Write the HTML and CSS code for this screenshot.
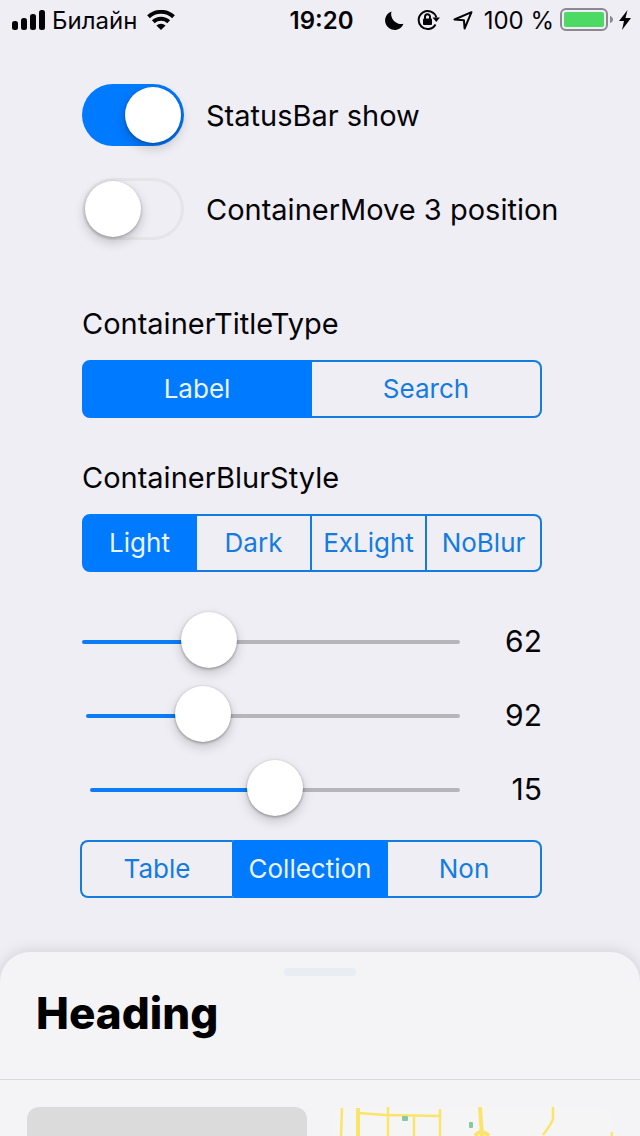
FILE: index.html
```html
<!DOCTYPE html>
<html lang="en">
<head>
<meta charset="utf-8">
<meta name="viewport" content="width=device-width">
<title>Container settings</title>
<link rel="stylesheet" href="styles.css">
</head>
<body>
<header class="status">
  <div class="status-left">
    <svg class="icon" width="34" height="20" viewBox="0 0 34 20"><rect x="0" y="11" width="6" height="9" rx="2.5"/><rect x="9" y="8" width="6" height="12" rx="2.5"/><rect x="18" y="4" width="6" height="16" rx="2.5"/><rect x="27" y="0" width="6" height="20" rx="2.5"/></svg>
    <span class="carrier">Билайн</span>
    <svg class="icon" width="28" height="20" viewBox="0 0 28 20"><path d="M14 20l-4.600-4.600a7 7 0 0 1 9.200 0z"/><path class="stroke thick" d="M6.300 11.700a11.300 11.300 0 0 1 15.400 0M1.500 6.800a18.300 18.300 0 0 1 25 0"/></svg>
  </div>
  <time class="clock">19:20</time>
  <div class="status-right">
    <div class="indicators">
      <svg class="icon" width="19" height="19" viewBox="0 0 19 19"><path d="M6.500 .5A9.500 9.500 0 1 0 18.500 12.800 10 10 0 0 1 6.500 .5z"/></svg>
      <svg class="icon" width="23" height="22" viewBox="0 0 23 22"><path class="stroke" d="M18.500 15.500A9 9 0 1 1 19.300 8.500"/><path d="M15.500 8.500H23l-3.700 4.500z"/><rect x="6" y="9.500" width="9" height="6.500" rx="1"/><path class="stroke" d="M8 10V7.800a2.500 2.500 0 0 1 5 0V10"/></svg>
      <svg class="icon" width="20" height="19" viewBox="0 0 20 19"><path class="stroke thin" d="M18.500 1.200L1.500 8.500l9.400.7.700 8.300z"/></svg>
    </div>
    <span class="percent">100 %</span>
    <svg class="icon" width="53" height="24" viewBox="0 0 53 24"><rect x="1" y="1" width="46" height="21" rx="5" fill="none" stroke="#8c8792" stroke-width="2"/><rect x="4" y="4" width="40" height="15" rx="2" fill="#4cd964"/><path d="M50 8c4 1 4 6 0 7z" fill="#8c8792"/></svg>
    <svg class="icon" width="12" height="20" viewBox="0 0 12 20"><path d="M8.500 0L0 11h5L3 20l9-12H6.500z"/></svg>
  </div>
</header>

<main class="settings">
  <div class="switches">
    <label class="switch-row"><input class="switch" type="checkbox" role="switch" checked><span>StatusBar show</span></label>
    <label class="switch-row"><input class="switch" type="checkbox" role="switch"><span>ContainerMove 3 position</span></label>
  </div>

  <section class="group" aria-labelledby="title-type">
    <h2 class="group-title" id="title-type">ContainerTitleType</h2>
    <div class="segments">
      <button class="segment selected" type="button" aria-pressed="true">Label</button>
      <button class="segment" type="button" aria-pressed="false">Search</button>
    </div>
  </section>

  <section class="group" aria-labelledby="blur-style">
    <h2 class="group-title" id="blur-style">ContainerBlurStyle</h2>
    <div class="segments">
      <button class="segment selected" type="button" aria-pressed="true">Light</button>
      <button class="segment" type="button" aria-pressed="false">Dark</button>
      <button class="segment" type="button" aria-pressed="false">ExLight</button>
      <button class="segment" type="button" aria-pressed="false">NoBlur</button>
    </div>
  </section>

  <div class="sliders">
    <div class="slider-row"><input class="slider" id="s1" type="range" aria-label="First value" max="202" value="62" style="--fill:31%"><output class="value" for="s1">62</output></div>
    <div class="slider-row inset"><input class="slider" id="s2" type="range" aria-label="Second value" max="329" value="92" style="--fill:28%"><output class="value" for="s2">92</output></div>
    <div class="slider-row inset-more"><input class="slider" id="s3" type="range" aria-label="Third value" max="30" value="15" style="--fill:50%"><output class="value" for="s3">15</output></div>
  </div>

  <div class="segments content-type">
    <button class="segment" type="button" aria-pressed="false">Table</button>
    <button class="segment selected" type="button" aria-pressed="true">Collection</button>
    <button class="segment" type="button" aria-pressed="false">Non</button>
  </div>
</main>

<section class="sheet">
  <div class="sheet-head">
    <div class="handle"></div>
    <h1 class="heading">Heading</h1>
  </div>
  <div class="cards">
    <div class="card"></div>
    <div class="card map">
      <svg width="280" height="29" viewBox="0 0 280 29">
        <g fill="none" stroke="#fbe46a" stroke-width="2.500"><path d="M9 1L8 29"/><path stroke-width="4" d="M25 1V29"/><path d="M25 6L52 8 107 9M55 0V29M81 8V29M107 2V29"/><path stroke-width="4" d="M147 0L149 29M142 29q6-8 14 0"/><path d="M220 0V12Q219 16 210 28M279 25V29"/></g>
        <g fill="#84c9a0"><rect x="69" y="9" width="6" height="5" rx="1"/><rect x="136" y="15" width="4" height="6" rx="1"/></g>
      </svg>
    </div>
  </div>
</section>
</body>
</html>
```
FILE: styles.css
```css
* { box-sizing: border-box; }

body {
  margin: 0;
  height: 100vh;
  display: flex;
  flex-direction: column;
  overflow: hidden;
  background: #efeef5;
  color: #050508;
  font-family: Inter, "Noto Sans", sans-serif;
  font-size: 29px;
}

.status {
  display: grid;
  grid-template-columns: 1fr auto 1fr;
  align-items: center;
  height: 40px;
  padding: 0 9px 0 12px;
  font-size: 24px;
}
.status-left, .status-right { display: flex; align-items: center; gap: 6px; white-space: nowrap; }
.carrier { margin-right: 4px; }
.status-right { justify-content: flex-end; }
.indicators { display: flex; align-items: center; gap: 13px; margin-right: 5px; }
.clock { font-weight: 600; }
.icon { flex: none; fill: #050508; }
.stroke { fill: none; stroke: #050508; stroke-width: 2; }
.thick { stroke-width: 4; }
.thin { stroke-width: 2; stroke-linejoin: round; }

.settings { padding: 44px 98px 54px 82px; }

.switches { display: grid; gap: 32px; }
.switch-row { display: flex; align-items: center; gap: 22px; white-space: nowrap; }
.switch {
  appearance: none;
  flex: none;
  display: flex;
  align-items: center;
  width: 102px;
  height: 62px;
  margin: 0;
  padding: 0 3px;
  border-radius: 31px;
  box-shadow: inset 0 0 0 3px #e5e4e9;
}
.switch::before {
  content: "";
  width: 56px;
  height: 56px;
  border-radius: 50%;
  background: #fff;
  box-shadow: 0 5px 12px rgba(0, 0, 0, .2), 0 1px 3px rgba(0, 0, 0, .25);
}
.switch:checked { justify-content: flex-end; background: #007aff; box-shadow: none; }

.group { margin-top: 42px; }
.switches + .group { margin-top: 66px; }
.group-title { margin: 0 0 18px; font-size: 29px; font-weight: 400; line-height: 36px; }

.segments {
  display: grid;
  grid-auto-flow: column;
  grid-auto-columns: 1fr;
  height: 58px;
}
.segment {
  padding: 0 0 2px;
  border: 2px solid #147ce0;
  border-left-width: 0;
  background: none;
  color: #147ce0;
  font: inherit;
  font-size: 26px;
}
.segment:first-child { border-left-width: 2px; border-radius: 8px 0 0 8px; }
.segment:last-child { border-radius: 0 8px 8px 0; }
.segment.selected { background: #007aff; border-color: #007aff; color: #eaf4ff; }
.segment:has(+ .selected) { border-right-color: #007aff; }

.sliders { display: grid; gap: 14px; margin: 40px 0 20px; }
.slider-row { display: grid; grid-template-columns: 1fr 82px; align-items: center; height: 60px; text-align: right; }
.value { padding-bottom: 2px; font-size: 30px; line-height: 36px; }
.inset { padding-left: 4px; }
.inset-more { padding-left: 8px; }
.slider { appearance: none; width: 100%; height: 60px; margin: 0; background: none; }
.slider::-webkit-slider-runnable-track {
  height: 4px;
  border-radius: 2px;
  background: linear-gradient(to right, #0a7cf5 var(--fill), #b5b5ba var(--fill));
}
.slider::-webkit-slider-thumb {
  appearance: none;
  width: 56px;
  height: 56px;
  margin-top: -28px;
  border-radius: 50%;
  background: #fff;
  box-shadow: 0 5px 12px rgba(0, 0, 0, .18), 0 1px 3px rgba(0, 0, 0, .35);
}
.content-type { margin-left: -2px; }

.sheet {
  flex: 1;
  display: flex;
  flex-direction: column;
  min-height: 0;
  border-radius: 30px 30px 0 0;
  background: #f4f4f7;
  box-shadow: 0 0 16px rgba(0, 0, 0, .14);
}
.sheet-head { padding: 16px 36px 38px; border-bottom: 1px solid #d9d9dd; }
.handle { width: 72px; height: 8px; margin: 0 auto 9px; border-radius: 4px; background: #e8edf3; }
.heading { margin: 0; font-size: 44px; font-weight: 800; line-height: 56px; color: #000; }
.cards { flex: 1; display: grid; grid-template-columns: 1fr 1fr; gap: 26px; padding: 27px 27px 0; }
.card { border-radius: 12px 12px 0 0; background: #dbdbdb; overflow: hidden; }
.map { background: #f5f5f6; }
```
